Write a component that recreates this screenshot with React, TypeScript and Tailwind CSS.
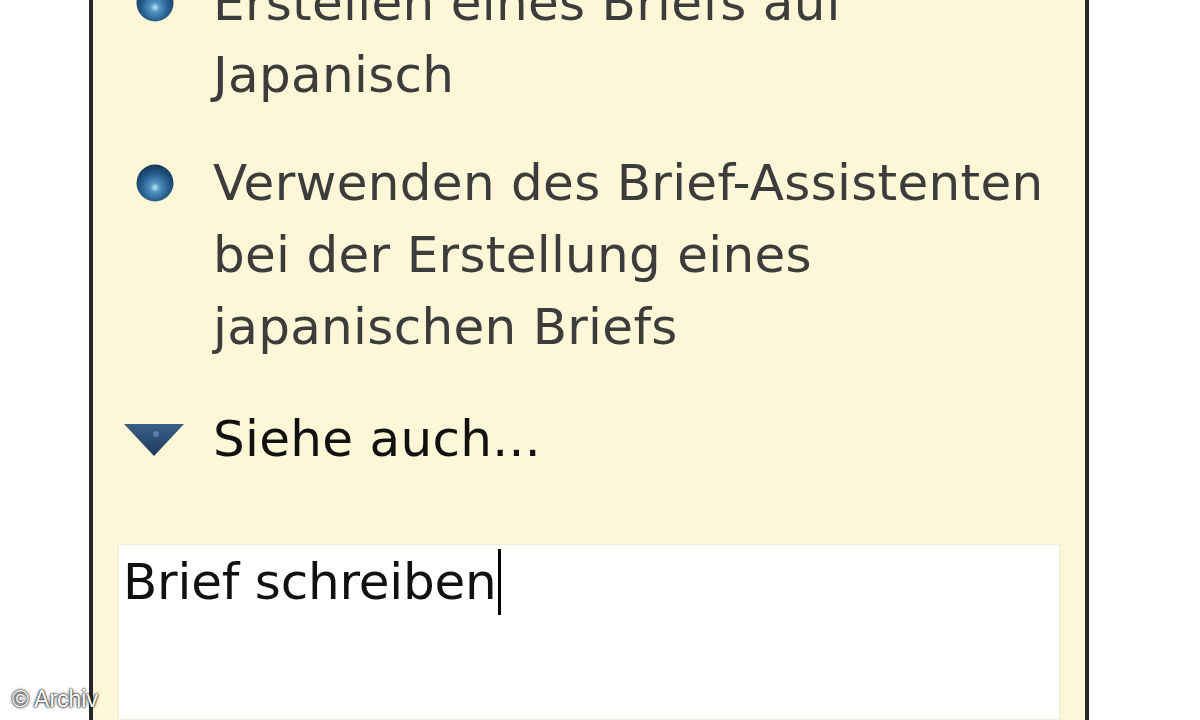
import React from "react";

function Bullet() {
  return (
    <svg width="40" height="40" viewBox="0 0 40 40" className="shrink-0">
      <defs>
        <radialGradient id="bg1" cx="0.5" cy="0.62" r="0.6">
          <stop offset="0" stopColor="#bfe6f5" />
          <stop offset="0.22" stopColor="#4f93c0" />
          <stop offset="0.65" stopColor="#235887" />
          <stop offset="1" stopColor="#163a60" />
        </radialGradient>
      </defs>
      <circle cx="20" cy="20" r="18.5" fill="url(#bg1)" />
    </svg>
  );
}

function Triangle() {
  return (
    <svg width="64" height="38" viewBox="0 0 64 38" className="shrink-0">
      <defs>
        <linearGradient id="tg" x1="0" y1="0" x2="0" y2="1">
          <stop offset="0" stopColor="#3b5f86" />
          <stop offset="1" stopColor="#1d3a5c" />
        </linearGradient>
      </defs>
      <polygon points="2,4 62,4 32,36" fill="url(#tg)" />
      <circle cx="34" cy="14" r="3" fill="#6d8fb3" opacity="0.7" />
    </svg>
  );
}

export default function App() {
  const font = { fontFamily: '"DejaVu Sans", "Liberation Sans", sans-serif' };
  return (
    <div className="w-[1200px] h-[720px] bg-white overflow-hidden relative" style={font}>
      <div className="ml-[89px] w-[1000px] h-[720px] border-l-[4px] border-r-[4px] border-[#262626] bg-[#fdf7d8] flex flex-col">
        <div className="mt-[-33px] pl-[120px] flex flex-col gap-[36px] text-[#3c3c3c] text-[50px] leading-[72px] tracking-[0.3px]">
          <div className="relative">
            <div className="absolute left-[-78px] top-[16px]"><Bullet /></div>
            <div>Erstellen eines Briefs auf</div>
            <div>Japanisch</div>
          </div>
          <div className="relative">
            <div className="absolute left-[-78px] top-[16px]"><Bullet /></div>
            <div>Verwenden des Brief-Assistenten</div>
            <div>bei der Erstellung eines</div>
            <div>japanischen Briefs</div>
          </div>
        </div>
        <div className="mt-[40px] pl-[29px] flex items-center gap-[27px] h-[72px]">
          <Triangle />
          <div className="text-[50px] leading-[72px] text-[#111] tracking-[0.3px]">Siehe auch...</div>
        </div>
        <div className="mt-[69px] ml-[25px] w-[942px] flex-1 bg-white border border-[#f0ecd8] pl-[4px] pt-[2px]">
          <div className="flex items-center h-[70px] text-[50px] text-[#111] tracking-[-0.2px]">
            <span>Brief schreiben</span>
            <span className="inline-block w-[3px] h-[66px] bg-black ml-[1px]" />
          </div>
        </div>
      </div>
      <div
        className="absolute left-[12px] bottom-[9px] text-white text-[23px] leading-none"
        style={{ fontFamily: '"Liberation Sans", sans-serif', textShadow: "0 0 3px #000, 0 0 2px #000" }}
      >
        © Archiv
      </div>
    </div>
  );
}
